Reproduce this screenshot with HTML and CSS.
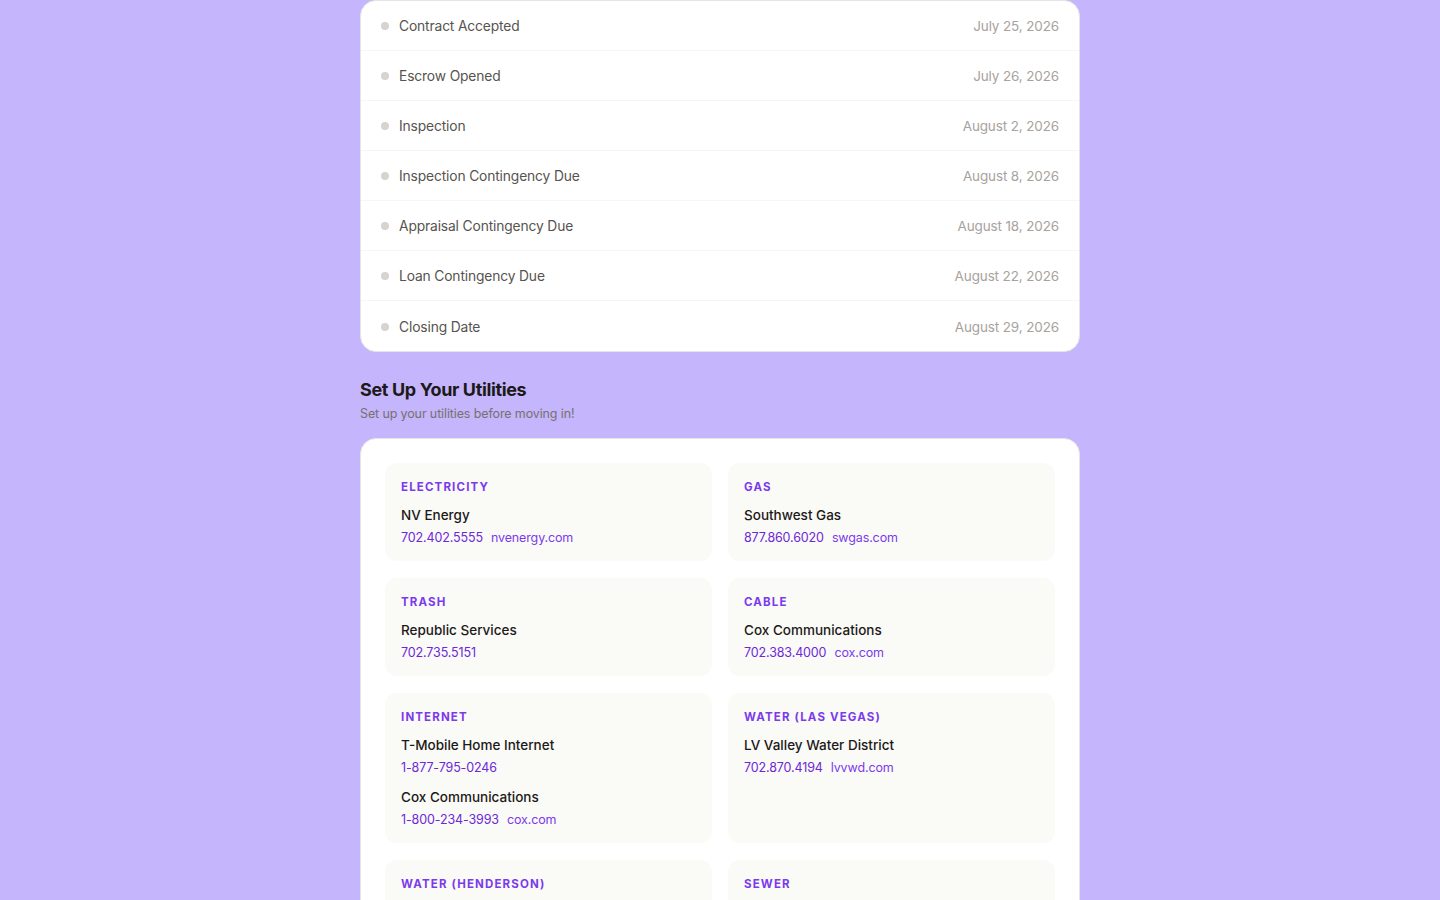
FILE: index.html
```html
<!DOCTYPE html>
<html lang="en">
<head>
<meta charset="utf-8">
<title>Closing Timeline &amp; Utilities</title>
<link rel="stylesheet" href="styles.css">
</head>
<body>
<main class="page">
  <section class="timeline">
    <div class="tl-row"><span class="dot"></span><span class="tl-label">Contract Accepted</span><span class="tl-date">July 25, 2026</span></div>
    <div class="tl-row"><span class="dot"></span><span class="tl-label">Escrow Opened</span><span class="tl-date">July 26, 2026</span></div>
    <div class="tl-row"><span class="dot"></span><span class="tl-label">Inspection</span><span class="tl-date">August 2, 2026</span></div>
    <div class="tl-row"><span class="dot"></span><span class="tl-label">Inspection Contingency Due</span><span class="tl-date">August 8, 2026</span></div>
    <div class="tl-row"><span class="dot"></span><span class="tl-label">Appraisal Contingency Due</span><span class="tl-date">August 18, 2026</span></div>
    <div class="tl-row"><span class="dot"></span><span class="tl-label">Loan Contingency Due</span><span class="tl-date">August 22, 2026</span></div>
    <div class="tl-row"><span class="dot"></span><span class="tl-label">Closing Date</span><span class="tl-date">August 29, 2026</span></div>
  </section>

  <section class="utilities">
    <h2 class="section-title">Set Up Your Utilities</h2>
    <p class="section-sub">Set up your utilities before moving in!</p>
    <div class="util-panel">
      <div class="util-card">
        <div class="util-type">Electricity</div>
        <div class="provider">
          <div class="prov-name">NV Energy</div>
          <div class="prov-links"><a class="lnk">702.402.5555</a><a class="lnk">nvenergy.com</a></div>
        </div>
      </div>
      <div class="util-card">
        <div class="util-type">Gas</div>
        <div class="provider">
          <div class="prov-name">Southwest Gas</div>
          <div class="prov-links"><a class="lnk">877.860.6020</a><a class="lnk">swgas.com</a></div>
        </div>
      </div>
      <div class="util-card">
        <div class="util-type">Trash</div>
        <div class="provider">
          <div class="prov-name">Republic Services</div>
          <div class="prov-links"><a class="lnk">702.735.5151</a></div>
        </div>
      </div>
      <div class="util-card">
        <div class="util-type">Cable</div>
        <div class="provider">
          <div class="prov-name">Cox Communications</div>
          <div class="prov-links"><a class="lnk">702.383.4000</a><a class="lnk">cox.com</a></div>
        </div>
      </div>
      <div class="util-card">
        <div class="util-type">Internet</div>
        <div class="provider">
          <div class="prov-name">T-Mobile Home Internet</div>
          <div class="prov-links"><a class="lnk">1-877-795-0246</a></div>
        </div>
        <div class="provider">
          <div class="prov-name">Cox Communications</div>
          <div class="prov-links"><a class="lnk">1-800-234-3993</a><a class="lnk">cox.com</a></div>
        </div>
      </div>
      <div class="util-card">
        <div class="util-type">Water (Las Vegas)</div>
        <div class="provider">
          <div class="prov-name">LV Valley Water District</div>
          <div class="prov-links"><a class="lnk">702.870.4194</a><a class="lnk">lvvwd.com</a></div>
        </div>
      </div>
      <div class="util-card">
        <div class="util-type">Water (Henderson)</div>
        <div class="provider">
          <div class="prov-name">City of Henderson</div>
          <div class="prov-links"><a class="lnk">702.267.5900</a><a class="lnk">cityofhenderson.com</a></div>
        </div>
      </div>
      <div class="util-card">
        <div class="util-type">Sewer</div>
        <div class="provider">
          <div class="prov-name">Clark County Water Reclamation</div>
          <div class="prov-links"><a class="lnk">702.668.8888</a><a class="lnk">cleanwaterteam.com</a></div>
        </div>
      </div>
    </div>
  </section>
</main>
</body>
</html>
```

FILE: styles.css
```css
* { box-sizing: border-box; }
html, body { margin: 0; padding: 0; }
body {
  background: #c4b5fd;
  font-family: Inter, "Noto Sans", sans-serif;
  color: #1c1917;
  -webkit-font-smoothing: antialiased;
}
.page {
  width: 720px;
  margin: 0 auto;
  padding-bottom: 40px;
}
.timeline {
  background: #ffffff;
  border: 1px solid #e7e5e4;
  border-radius: 16px;
  overflow: hidden;
}
.tl-row {
  height: 50px;
  display: flex;
  align-items: center;
  padding: 1px 20px 0;
  border-bottom: 1px solid #f5f5f4;
}
.tl-row:last-child { border-bottom: none; }
.dot {
  width: 8px;
  height: 8px;
  border-radius: 50%;
  background: #d6d3d1;
  margin-right: 10px;
  flex: none;
}
.tl-label {
  flex: 1;
  font-size: 13.8px;
  letter-spacing: -0.01em;
  color: #57534e;
}
.tl-date {
  font-size: 13.5px;
  letter-spacing: -0.01em;
  color: #a8a29e;
}
.section-title {
  margin: 24px 0 0;
  font-size: 18px;
  line-height: 28px;
  font-weight: 700;
  color: #1c1917;
  letter-spacing: -0.02em;
}
.section-sub {
  margin: 0;
  font-size: 12.5px;
  line-height: 20px;
  letter-spacing: -0.01em;
  color: #78716c;
}
.util-panel {
  margin-top: 14px;
  background: #ffffff;
  border: 1px solid #e7e5e4;
  border-radius: 16px;
  padding: 24px;
  display: grid;
  grid-template-columns: 1fr 1fr;
  gap: 17px 16px;
  align-items: stretch;
}
.util-card {
  background: #fafaf7;
  border-radius: 12px;
  padding: 16px 16px 14px;
}
.util-type {
  font-size: 11.5px;
  line-height: 16px;
  font-weight: 700;
  letter-spacing: 0.1em;
  text-transform: uppercase;
  color: #7c3aed;
}
.provider { margin-top: 10px; }
.provider + .provider { margin-top: 10px; }
.prov-name {
  font-size: 13.5px;
  line-height: 20px;
  font-weight: 500;
  color: #1c1917;
}
.prov-links {
  margin-top: 4px;
  display: flex;
  gap: 8px;
  font-size: 12.5px;
  line-height: 18px;
  letter-spacing: -0.01em;
}
.lnk { color: #6d28d9; text-decoration: none; }
.lnk + .lnk { color: #7c3aed; }
```
